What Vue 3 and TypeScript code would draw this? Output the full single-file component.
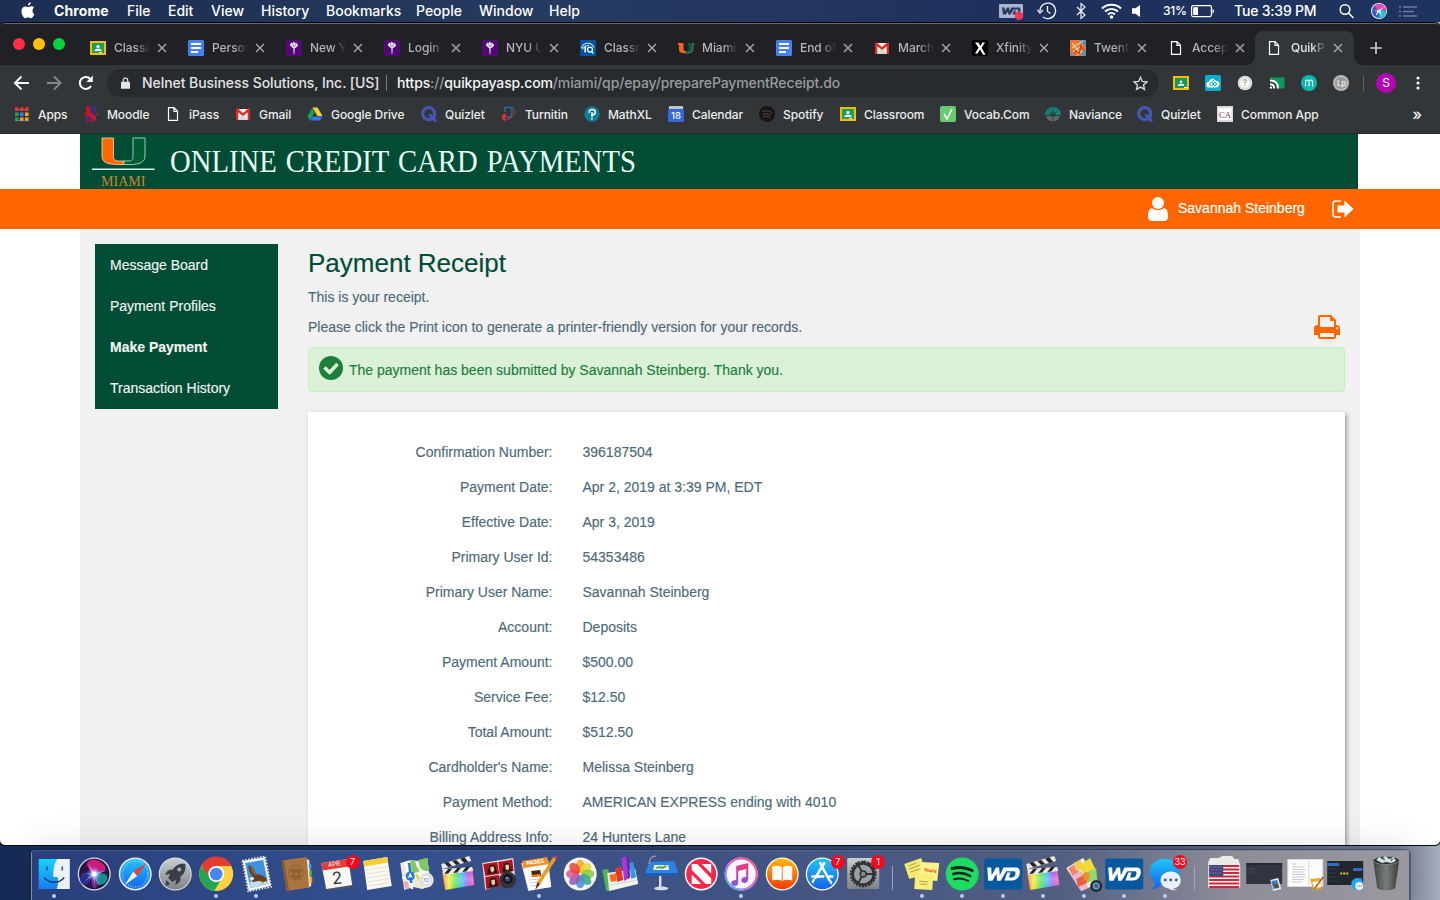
<script setup lang="ts">
interface Cell { name: string; width: number }
interface Tab { icon: string; title: string }
interface Bookmark { icon: string; label: string; width: number }
interface DockItem { icon: string; running?: boolean; badge?: string; divider?: boolean }
interface Glyph { text: string; x: number; y: number; size: number; fill: string; serif?: boolean; weight?: number; rotate?: string; length?: number }

const menus: Cell[] = [
  { name: 'File', width: 41 },
  { name: 'Edit', width: 43 },
  { name: 'View', width: 50 },
  { name: 'History', width: 65 },
  { name: 'Bookmarks', width: 90 },
  { name: 'People', width: 63 },
  { name: 'Window', width: 70 },
  { name: 'Help', width: 40 },
]

const tabs: Tab[] = [
  { icon: 'classroom', title: 'Classe' },
  { icon: 'docs', title: 'Person' },
  { icon: 'nyu', title: 'New Y' },
  { icon: 'nyu', title: 'Login' },
  { icon: 'nyu', title: 'NYU U' },
  { icon: 'iq', title: 'Classr' },
  { icon: 'umiami', title: 'Miami' },
  { icon: 'docs', title: 'End of' },
  { icon: 'gmail', title: 'March' },
  { icon: 'xfinity', title: 'Xfinity' },
  { icon: 'photo', title: 'Twent' },
  { icon: 'page', title: 'Accep' },
  { icon: 'page', title: 'QuikPA' },
]

const bookmarks: Bookmark[] = [
  { icon: 'apps', label: 'Apps', width: 69 },
  { icon: 'moodle', label: 'Moodle', width: 82 },
  { icon: 'page', label: 'iPass', width: 70 },
  { icon: 'gmail', label: 'Gmail', width: 72 },
  { icon: 'drive', label: 'Google Drive', width: 114 },
  { icon: 'quizlet', label: 'Quizlet', width: 80 },
  { icon: 'turnitin', label: 'Turnitin', width: 83 },
  { icon: 'pearson', label: 'MathXL', width: 84 },
  { icon: 'calendar', label: 'Calendar', width: 91 },
  { icon: 'spotify', label: 'Spotify', width: 81 },
  { icon: 'classroom', label: 'Classroom', width: 100 },
  { icon: 'vocab', label: 'Vocab.Com', width: 105 },
  { icon: 'naviance', label: 'Naviance', width: 92 },
  { icon: 'quizlet', label: 'Quizlet', width: 80 },
  { icon: 'common', label: 'Common App', width: 110 },
]

const extensions = ['ext-classroom', 'ext-cloud', 'ext-help', 'ext-cast', 'ext-m', 'ext-lp']

const nav = ['Message Board', 'Payment Profiles', 'Make Payment', 'Transaction History']

const receipt: [string, string][] = [
  ['Confirmation Number:', '396187504'],
  ['Payment Date:', 'Apr 2, 2019 at 3:39 PM, EDT'],
  ['Effective Date:', 'Apr 3, 2019'],
  ['Primary User Id:', '54353486'],
  ['Primary User Name:', 'Savannah Steinberg'],
  ['Account:', 'Deposits'],
  ['Payment Amount:', '$500.00'],
  ['Service Fee:', '$12.50'],
  ['Total Amount:', '$512.50'],
  ["Cardholder's Name:", 'Melissa Steinberg'],
  ['Payment Method:', 'AMERICAN EXPRESS ending with 4010'],
  ['Billing Address Info:', '24 Hunters Lane'],
]

const dock: DockItem[] = [
  { icon: 'finder', running: true },
  { icon: 'siri' },
  { icon: 'safari' },
  { icon: 'launchpad' },
  { icon: 'chrome', running: true },
  { icon: 'mail', running: true },
  { icon: 'contacts' },
  { icon: 'ical', badge: '7' },
  { icon: 'notes' },
  { icon: 'maps' },
  { icon: 'finalcut' },
  { icon: 'photobooth' },
  { icon: 'pages', running: true },
  { icon: 'photos' },
  { icon: 'numbers' },
  { icon: 'keynote' },
  { icon: 'news' },
  { icon: 'itunes', running: true },
  { icon: 'books' },
  { icon: 'appstore', badge: '7' },
  { icon: 'settings', badge: '1' },
  { icon: '', divider: true },
  { icon: 'stickies', running: true },
  { icon: 'spotifyapp', running: true },
  { icon: 'wd', running: true },
  { icon: 'finalcut', running: true },
  { icon: 'swatches', running: true },
  { icon: 'wd', running: true },
  { icon: 'messages', running: true, badge: '33' },
  { icon: '', divider: true },
  { icon: 'usfolder' },
  { icon: 'win-dark' },
  { icon: 'win-doc' },
  { icon: 'win-chat' },
  { icon: 'trash' },
]

// Lettering that sits on top of an icon's shapes, in the icon's own units.
const glyphs: Record<string, Glyph[]> = {
  moodle: [{ text: 'NATICK', x: 8, y: 9.6, size: 4, fill: '#bb2335', serif: true, length: 15 }],
  calendar: [{ text: '18', x: 8, y: 13, size: 9.5, fill: '#fff', weight: 500 }],
  common: [{ text: 'CA', x: 8, y: 11.5, size: 9, fill: '#a52855', serif: true, length: 12 }],
  'ext-help': [{ text: '?', x: 8, y: 11, size: 8.5, fill: '#aaa', weight: 700 }],
  'ext-lp': [{ text: 'Lp', x: 8.5, y: 11, size: 7.5, fill: '#eee', weight: 600 }],
  ical: [
    { text: 'APR', x: 17, y: 12, size: 6, fill: '#fff', rotate: 'rotate(-6 18 12)' },
    { text: '2', x: 20, y: 30, size: 17, fill: '#353535', rotate: 'rotate(-6 20 25)' },
  ],
  maps: [{ text: '3D', x: 28, y: 28, size: 5, fill: '#789' }],
  pages: [{ text: 'PAGES', x: 16, y: 10, size: 5.5, fill: '#fff', weight: 700, rotate: 'rotate(-8 16 9)' }],
  stickies: [{ text: 'Yours', x: 28, y: 18, size: 4.5, fill: '#e12b1b', weight: 700, rotate: 'rotate(6 28 18)' }],
}

const petals = ['#f7a823', '#e9d92c', '#8fc642', '#35ae82', '#4a90d9', '#8a62b5', '#d9569c', '#ee4a3a']
const teeth = Array.from({ length: 12 }, (_, i) => i * 30)
</script>

<template>
  <div class="desktop">
    <svg class="defs" width="0" height="0">
      <defs>
        <linearGradient id="rainbow" x1="0" x2="1"><stop offset="0" stop-color="#fb5f2c" /><stop offset=".2" stop-color="#f7ea18" /><stop offset=".42" stop-color="#45e04a" /><stop offset=".62" stop-color="#29b7f0" /><stop offset=".8" stop-color="#a64bf0" /><stop offset="1" stop-color="#f342a4" /></linearGradient>
        <linearGradient id="whiteup" x1="0" x2="0" y1="0" y2="1"><stop offset="0" stop-color="#fff" stop-opacity="0" /><stop offset=".5" stop-color="#fff" stop-opacity=".35" /><stop offset="1" stop-color="#fff" stop-opacity=".1" /></linearGradient>
        <linearGradient id="skyblue" x1="0" x2="0" y1="0" y2="1"><stop offset="0" stop-color="#1fc4fb" /><stop offset="1" stop-color="#1563e8" /></linearGradient>
        <linearGradient id="finderblue" x1="0" x2="0" y1="0" y2="1"><stop offset="0" stop-color="#12d3fd" /><stop offset="1" stop-color="#1a7df2" /></linearGradient>
        <linearGradient id="sunset" x1="0" x2="0" y1="0" y2="1"><stop offset="0" stop-color="#ffb800" /><stop offset="1" stop-color="#f23a08" /></linearGradient>
        <linearGradient id="steel" x1="0" x2="0" y1="0" y2="1"><stop offset="0" stop-color="#c9ced0" /><stop offset="1" stop-color="#7d8386" /></linearGradient>
        <linearGradient id="note" x1="0" x2="0" y1="0" y2="1"><stop offset="0" stop-color="#f9386c" /><stop offset="1" stop-color="#7a58ee" /></linearGradient>
        <linearGradient id="ring" x1="1" x2="0" y1="0" y2="1"><stop offset="0" stop-color="#ff4d62" /><stop offset=".5" stop-color="#e55be8" /><stop offset="1" stop-color="#29c5f5" /></linearGradient>
        <radialGradient id="siriglow"><stop offset="0" stop-color="#fff" /><stop offset=".3" stop-color="#c9b7f3" stop-opacity=".7" /><stop offset=".7" stop-color="#5d2bd6" stop-opacity="0" /></radialGradient>
        <linearGradient id="bin" x1="0" x2="1"><stop offset="0" stop-color="#3d4240" /><stop offset=".5" stop-color="#777b79" /><stop offset="1" stop-color="#333735" /></linearGradient>
      </defs>

      <symbol id="i-classroom" viewBox="0 0 16 16"><path fill="#fbbc04" d="M0 1h16v14H0z" /><path fill="#18a05e" d="M2 3h12v10H2z" /><circle cx="8" cy="6.5" r="1.6" fill="#fff" /><path fill="#fff" d="M4.2 11c0-1.8 2-2.3 3.8-2.3s3.8.5 3.8 2.3z" /><path fill="#e8e8e8" d="M9 12h3v1H9z" /></symbol>
      <symbol id="i-docs" viewBox="0 0 16 16"><rect width="16" height="16" rx="1.5" fill="#4580f4" /><path stroke="#fff" stroke-width="1.8" d="M3 4h10M3 8h10M3 12h7" /></symbol>
      <symbol id="i-nyu" viewBox="0 0 16 16"><path fill="#4f0b73" d="M0 0h16v16H0z" /><path fill="#e9dcf2" d="M7.200 7h1.600l-.4 7h-.8z" /><path fill="#efe4f5" d="M3.800 5.200C4 3.500 5 4 5.300 2.500l1.200.8L7.800 1.500l1.200 1.700 1.500-.8.3 1.600 1.500.8-.9 1.700L9.300 8H6.800z" /><path d="M6.500 3.500 7.500 7M9.500 4 8.500 7" stroke="#7b4697" stroke-width=".6" /></symbol>
      <symbol id="i-iq" viewBox="0 0 16 16"><path fill="#0053a0" d="M0 0h16v16H0z" /><path d="M1.500 8C3 2.500 11 1 14 7.500M2 9c2-1 2-4 7-3.500" stroke="#d9e9f7" fill="none" stroke-width="1.100" /><path d="M5.200 7v5.500" stroke="#fff" stroke-width="1.500" /><circle cx="10" cy="9.600" r="2.500" fill="none" stroke="#fff" stroke-width="1.300" /><path d="m11 11 2.500 2.500" stroke="#fff" stroke-width="1.300" /></symbol>
      <symbol id="i-umiami" viewBox="0 0 16 16"><path fill="#f4641e" d="M0 3h5.500v6.500c0 .8 1 1.500 2.500 1.500v2.300C3 13.300 1 12.300 1 9.500V5H0z" /><path fill="#0a5a38" d="M10 3h6v2h-1v4.500c0 2.800-2 3.800-7 3.800V11c1.500 0 2.800-.5 2.800-1.500V5H10z" /><path stroke="#9fb6a8" stroke-width=".5" fill="none" d="M15.600 3v2h-.8v4.500c0 2.500-2 3.400-6.800 3.500" /></symbol>
      <symbol id="i-gmail" viewBox="0 0 16 16"><path fill="#f0f0f0" d="M1 3h14v11H1z" /><path fill="#d8d8d8" d="m3 14 5-5 5 5z" /><path fill="#e02a20" d="M1 2.500h1.700L8 7.200l5.300-4.700H15V14h-2.300V6.200L8 10 3.300 6.200V14H1z" /></symbol>
      <symbol id="i-xfinity" viewBox="0 0 16 16"><path d="M0 0h16v16H0z" /><path fill="#fff" d="M3 2.500h3.500L8.300 6l2.200-3.500h2.500L9.600 7.700l3.900 7H11L8 9.500 5.500 13.500H3l3.600-5.800z" /></symbol>
      <symbol id="i-photo" viewBox="0 0 16 16"><path fill="#e2793a" d="M0 0h16v16H0z" /><path fill="#5c91b5" d="M9 0h7v7L11 3zM0 12l4 4H0zM11 12l5-3v7h-4z" /><path d="m2 8 11-7M3 12l10-7M7 15l7-5M2 3l8 10" stroke="#ffc388" stroke-width="1.300" /><path d="m4 14 2-4 3 4 2-9 3 6" stroke="#a33a1d" fill="none" /></symbol>
      <symbol id="i-page" viewBox="0 0 16 16"><path d="M3.500 1.700h5.600l3.400 3.500v9.200h-9zM9 1.700v3.700h3.500" fill="none" stroke="#fff" stroke-width="1.200" /></symbol>
      <symbol id="i-apps" viewBox="0 0 16 16"><path fill="#e8231a" d="M1 1h3.500v4H1zM6 1h3.500v4H6zM11 1h3.500v4H11z" /><path fill="#19a35b" d="M1 6.500h3.500v3.500H1zM1 11.500h3.500V15H1z" /><path fill="#2b82f0" d="M6 6.500h3.500v3.500H6z" /><path fill="#f5a81c" d="M11 6.500h3.500v3.500H11zM6 11.500h3.500V15H6zM11 11.500h3.500V15H11z" /><path stroke="#888" stroke-width=".7" d="M1 3.700h13.500M1 14.700h13.500" /></symbol>
      <symbol id="i-moodle" viewBox="0 0 16 16"><path fill="#c01425" d="M3 0h3.500l5 16H8.500L6 9v7H3z" /><path fill="#2e308d" d="M7 0h6v6l-4-1zM3 11l5 1v3H4z" /><path fill="#2e308d" d="M9.500 0H13v16h-2z" /><path fill="#d3202e" d="m9 9 4 2-1 4-3-4z" /></symbol>
      <symbol id="i-drive" viewBox="0 0 16 16"><path fill="#ffce35" d="M5.500 1.500h5l5 8.500h-5z" /><path fill="#18a35d" d="M5.200 2 .5 10.200 3 14.500 7.700 6.300z" /><path fill="#3575ed" d="M6 10.500h9.500L13 14.500H3.500z" /></symbol>
      <symbol id="i-quizlet" viewBox="0 0 16 16"><circle cx="7.700" cy="7.700" r="6" fill="none" stroke="#4755b5" stroke-width="3.200" /><path d="m8.500 8.500 6.500 7" stroke="#4755b5" stroke-width="3" /></symbol>
      <symbol id="i-turnitin" viewBox="0 0 16 16"><path d="M4 6V1.500h7v6c0 4-3 5-5 3" fill="none" stroke="#276b9c" stroke-width="1.700" /><path d="M12.500 2.500C17 5 12 14 2.500 14V8.500" fill="none" stroke="#c0303a" stroke-width="1" /><path fill="#e02a30" d="M.2 10.500 3.500 7l2.800 4.500-2-.5v3.700H2.500z" /></symbol>
      <symbol id="i-pearson" viewBox="0 0 16 16"><circle cx="8" cy="8" r="7.700" fill="#0e7c91" /><path d="M5.500 7C4.500 5 6 3.500 8.300 3.500c4.200 0 4 5.500-.3 5.500M8 6v5" fill="none" stroke="#fff" stroke-width="1.500" /><circle cx="7.900" cy="12.700" r=".9" fill="#fff" /></symbol>
      <symbol id="i-calendar" viewBox="0 0 16 16"><path fill="#bec4cf" d="M1 0h14v4H1z" /><path fill="#3468d8" d="M0 3h16v13H0z" /></symbol>
      <symbol id="i-spotify" viewBox="0 0 16 16"><circle cx="8" cy="8" r="8" fill="#191414" /><path d="M3 5.500c3-1 7-1 10 1M3.500 8.300c3-.8 6-.5 8.700 1M4 10.800c2.500-.6 5-.3 7.200 1" stroke="#4a4646" fill="none" stroke-width="1.200" /></symbol>
      <symbol id="i-vocab" viewBox="0 0 16 16"><rect width="16" height="16" rx="2" fill="#67cb70" /><path d="m4 8 3 5 5-10" stroke="#fff" stroke-width="1.500" fill="none" /></symbol>
      <symbol id="i-naviance" viewBox="0 0 16 16"><path d="M0 9a8 8 0 0 1 16 0z" fill="#168078" /><path d="M1 10h14a7.300 7.300 0 0 1-14 0z" fill="#62696c" /><path d="m8 1.500.7 5.700L12 5l-2 3.500 4.500 1.500H1.500L6 8.500 4 5l3.300 2.200zM7.500 10h1v5h-1zM3 13l3-3h1zM13 13l-3-3H9z" fill="#24403f" /></symbol>
      <symbol id="i-common" viewBox="0 0 16 16"><path fill="#d9d9d9" d="M0 0h16v16H0z" /><path fill="#fff" d="M1.500 2h13v12h-13z" /></symbol>
      <symbol id="i-ext-classroom" viewBox="0 0 16 16"><path fill="#fbbc04" d="M0 1h16v14H0z" /><path fill="#12975b" d="M2 3h12v10H2z" /><circle cx="8" cy="6.700" r="1.300" fill="#fff" /><path fill="#fff" d="M4.500 10.700C5 9 6.500 8.700 8 8.700s3 .3 3.500 2zM11 12h3v1h-3z" /></symbol>
      <symbol id="i-ext-cloud" viewBox="0 0 16 16"><rect width="16" height="16" rx="1.500" fill="#06aed0" /><path fill="#fff" d="M4.500 12.500a3 3 0 0 1-.3-6C5 3 9.500 2.700 11 6c3 0 4 2 3.300 4-.5 1.500-1.500 2.500-3.300 2.500z" /><circle cx="6.500" cy="9" r="1.600" fill="none" stroke="#06aed0" /><circle cx="9.800" cy="9" r="1.600" fill="none" stroke="#06aed0" /><path d="m7 7 3-3" stroke="#06aed0" /></symbol>
      <symbol id="i-ext-help" viewBox="0 0 16 16"><circle cx="8" cy="8" r="7.300" fill="#dcdcdc" /><circle cx="8" cy="8" r="4.700" fill="#f8f8f8" /></symbol>
      <symbol id="i-ext-cast" viewBox="0 0 16 16"><path fill="#0a9b5c" d="M1 2.500h14.500v11H1z" /><path fill="#303538" d="M0 4.500c7 0 9.500 4 10 9.500H0z" /><path d="M1 5.500c5 0 8 3 8 8M1 9.200c2.700 0 4.300 1.700 4.300 4.300" stroke="#fff" stroke-width="1.900" fill="none" /><circle cx="2" cy="12.600" r="1.200" fill="#fff" /></symbol>
      <symbol id="i-ext-m" viewBox="0 0 16 16"><circle cx="8" cy="8" r="8" fill="#0ab9b1" /><path d="M4.500 11.500V6.500c0-1.800 3.500-1.800 3.500 0v5m0-5c0-1.800 3.500-1.800 3.500 0v5" fill="none" stroke="#fff" stroke-width="1.100" /></symbol>
      <symbol id="i-ext-lp" viewBox="0 0 16 16"><circle cx="8" cy="8" r="8" fill="#b8b8b8" /><circle cx="8" cy="8" r="6" fill="#999" /></symbol>

      <symbol id="i-finder" viewBox="0 0 40 40"><path fill="url(#finderblue)" d="M4.500 5h31v30h-31z" /><path fill="#eef1f6" d="M23 5h12.500v30h-13c1.500-4 1.500-7 1-12h-4.500C19 16 20 9 23 5z" /><path d="M12.700 12.500v4M28 12.500v4M10 23.500c5 6.500 15 6.500 20 0" stroke="#173b5e" stroke-width="1.300" fill="none" /></symbol>
      <symbol id="i-siri" viewBox="0 0 40 40"><circle cx="20" cy="20" r="16.500" fill="#d8dbe3" /><circle cx="20" cy="20" r="15.200" fill="#261642" /><path d="M20 20C12 14 10 8 17 6s18 6 13 11z" fill="#cf1a78" /><path d="M20 20C11 17 6 19 6 25s5 7 8 5z" fill="#2e2a8a" /><path d="M20 20c9-2 14 0 13 5s-7 7-11 5z" fill="#11918f" /><path d="M20 20C16 25 17 33 20 34s5-8 0-14z" fill="#7a2790" /><circle cx="20" cy="20" r="12" fill="url(#siriglow)" /><path d="m6 19 14 .5L33 16l-12 5 4 11-6-11-9 7 8-8z" fill="#6ee6e8" opacity=".85" /><path d="m14 9 6 10.500 1 12-3-11z" fill="#f6a4e5" opacity=".8" /><circle cx="20" cy="20" r="2.500" fill="#fff" /></symbol>
      <symbol id="i-safari" viewBox="0 0 40 40"><circle cx="20" cy="20" r="16.500" fill="#e9edf2" /><circle cx="20" cy="20" r="15" fill="url(#skyblue)" /><circle cx="20" cy="20" r="13" fill="none" stroke="#a3dcff" stroke-width="2" stroke-dasharray=".5 1.300" /><path fill="#f13c35" d="M31 9 18 17.500l4 4.500z" /><path fill="#f2f2f2" d="M9.500 31 18 17.500l4 4.500z" /></symbol>
      <symbol id="i-launchpad" viewBox="0 0 40 40"><circle cx="20" cy="20" r="16.500" fill="#dfe3e6" /><circle cx="20" cy="20" r="15.500" fill="url(#steel)" /><path fill="#393f44" d="M30 10c-6-1-10 2-13 6-3-1-6 1-7 5l5-1-2 4 4 4 4-2-1 5c4-2 6-4 5-8 4-3 6-7 5-13zM11 26l-1 6 5-2z" /><circle cx="24" cy="15.500" r="2" fill="#a6adb0" /></symbol>
      <symbol id="i-chrome" viewBox="0 0 40 40"><circle cx="20" cy="20" r="17" fill="#ffd13f" /><path fill="#e63b31" d="M5 12a17 17 0 0 1 30.500 0H20l-7 12z" /><path fill="#23a653" d="M4.800 12.500A17 17 0 0 0 18 37l8.500-14h-13z" /><circle cx="20" cy="20" r="8" fill="#fff" /><circle cx="20" cy="20" r="6.300" fill="#4688f1" /></symbol>
      <symbol id="i-mail" viewBox="0 0 40 40"><path fill="#f4f4f1" d="m6.500 7 22-4 6 29-22 5z" /><path d="m6 6.500 23-4.300L35 33l-23 4.500z" fill="none" stroke="#f4f4f1" stroke-width="1.500" stroke-dasharray="1.500 1.500" /><path fill="#3f92e0" d="m9 9 18-3 5 24-18 4z" /><path fill="#bfdcf2" d="m13 28 18-3 1 5-18 4z" /><path fill="#69401f" d="m12 11 5 3 3 6 5 1 5 3 1 3-4 1-4-1-6 1-3-3 4-1c-4-3-6-8-6-14z" /><path fill="#8c6136" d="m14 13 3 2 3 5-1 1c-3-2-4-5-5-8z" /><path fill="#f3e7d6" d="m13 24 4-1 1 2-3 2z" /><path fill="#deb23f" d="m25 28 3 0-2 3z" /></symbol>
      <symbol id="i-contacts" viewBox="0 0 40 40"><path fill="#f0e9dc" d="m29 5 3 1 2 26-4 2z" /><path fill="#33a8d8" d="M31.500 10H34v5h-2z" /><path fill="#5cb63c" d="M32 16h2.500v6H32z" /><path fill="#f3a62b" d="M32.500 23H35v6h-2.500z" /><path fill="#a9743f" d="m4.500 6.500 25-3.500 2.500 30.500L9.500 37z" /><path fill="#8b5d2f" d="m4.500 6.500 2.500-.4L12 36.600l-2.500.4z" /><circle cx="19" cy="18.500" r="7.500" fill="none" stroke="#8e6234" /><circle cx="16.500" cy="17" r="2.700" fill="#8e6234" /><circle cx="21.500" cy="17" r="2.700" fill="#8e6234" /><path fill="#8e6234" d="M13 22.500c2-3 5-3 6-.5 1-2.500 4-2.500 6 0-3 3.500-9 4-12 .5z" /></symbol>
      <symbol id="i-ical" viewBox="0 0 40 40"><path fill="#4e555f" d="m9 34 27-4v3L10 37z" /><path fill="#f7f7f5" d="m4 9 27-4 4 26-26 4z" /><path fill="#dd3f3d" d="m4 9 27-4 1.200 7.500-27 4z" /></symbol>
      <symbol id="i-notes" viewBox="0 0 40 40"><path fill="#faf8ef" d="m5 7 24-4 4.500 29L9 36z" /><path fill="#f5cf35" d="m5 7 24-4 1 5.500-24 4z" /><path d="m7 16 23-3.500M8 20l23-3.500M9 24l22-3.500M9 28l23-3.500M10 32l22-3.500" stroke="#d4d0c5" stroke-width=".6" /></symbol>
      <symbol id="i-maps" viewBox="0 0 40 40"><path fill="#eee8d8" d="m2 9 10-3 8 1 9-3 4 28-9 3-9-2-9 3z" /><path fill="#7fc95f" d="m20 6 9-2 2 14-9-3zM12 6l7 1 2 10-7 3z" /><path d="m7 8 7 27M18 7c2 9 7 13 14 15M4 24l26-6" stroke="#fff" stroke-width="2.500" fill="none" /><path d="m18 20 6 12" stroke="#f5c842" stroke-width="2" /><path fill="#e9a8b8" d="m5 28 4-1 2 7-4 1z" /><path d="m11 9 2 20" stroke="#2277db" stroke-width="2.500" /><circle cx="12" cy="22" r="4.500" fill="#2277db" /><path fill="#fff" d="m12 18.500 2.500 5.500-2.500-1-2.500 1z" /><circle cx="28" cy="26" r="7.500" fill="#e5e7e9" /><circle cx="28" cy="26" r="5" fill="#f9f9f9" stroke="#abb" stroke-width=".6" /></symbol>
      <symbol id="i-finalcut" viewBox="0 0 40 40"><path fill="url(#rainbow)" d="m4 18 30-4 2 17-29 5z" /><path fill="url(#whiteup)" d="m4 18 30-4 2 17-29 5z" /><path fill="#e8e8e5" d="M3 10 31 2l2 5-29 8zM4 15l30-2 1 4-30 4z" /><path fill="#252525" d="m6 9 4-1 4 4-4 1zM14 7l4-1 4 4-4 1zM22 5l4-2 4 5-4 1zM6 20l4-5 4-.5-4 5zM15 19l4-5 4-.5-4 5zM24 18l4-5 4-.5-4 5z" /></symbol>
      <symbol id="i-photobooth" viewBox="0 0 40 40"><path fill="#e6dede" d="m3 9 31-5 2 20-30 12z" /><path fill="#b41020" d="m4 10 14-2 2 12-14 2zM19 8l14-2.500 1.500 11.500-14 3zM6 23l14-2 1 11-14 3z" /><path fill="#281c1b" d="m8 20 2-8q3-3 6 0l2 7zM23 18l2-8q3-3 5 0l3 7zM9 34l2-9q3-3 6 0l2 7z" /><path fill="#efc5a7" d="m11 13 3.500-.5.7 4-2 2-1.800-1.600zM26 11l3.500-.5.5 4-1.600 2-2-1.600zM12 26l3.500-.5.5 4-1.600 2-2-1.600z" /><circle cx="28.500" cy="26" r="8.500" fill="#343436" /><circle cx="28.500" cy="25" r="5" fill="#101722" /><circle cx="28.500" cy="25" r="2.500" fill="#56416e" /><circle cx="27.500" cy="24" r="1" fill="#87b3c2" /></symbol>
      <symbol id="i-pages" viewBox="0 0 40 40"><path fill="#e7e4df" d="m2 9 27-3 3 27-23 4z" /><path fill="#fff" d="m4 15 24-4 4 22-22 3z" /><path fill="#f39020" d="m3 7 25-4 1 7-25 4z" /><path fill="#42240f" d="m12 17 9-1 1 6-9 1z" /><path fill="#f58620" d="m12 21 9-1v2l-9 1z" /><path stroke="#aaa" stroke-width=".6" d="m10 26 10-1M10 29l9-1M11 32l9-1M23 17l5-1M23 20l6-1" /><path fill="#f09a19" d="m34 3 3 2-16 25-3-2z" /><path fill="#663718" d="m18 28 3 2-5 6z" /><path fill="#d35" d="m34 3 1-2 3 2-1 2z" /></symbol>
      <symbol id="i-photos" viewBox="0 0 40 40"><circle cx="20" cy="20" r="16.500" fill="#f4f4f4" /><ellipse v-for="(c, i) in petals" :key="c" cx="20" cy="12.300" rx="4.500" ry="6.500" :fill="c" opacity=".87" :transform="`rotate(${i * 45} 20 20)`" /></symbol>
      <symbol id="i-numbers" viewBox="0 0 40 40"><path fill="#4eb84f" d="m2 16 6-1 4 21-6 1z" /><path fill="#f2f2ee" d="m7 19 28-4 3 15-29 7z" /><path stroke="#b8c4b6" d="m8 26 28-4M9 31l28-5" stroke-width=".6" /><path fill="#ef6a20" d="m9 21 7-2v8l-5 1z" /><path fill="#e53627" d="m15 14 6-1 2 13-6 2z" /><path fill="#a638db" d="m21 4 5-2 3 22-5 3z" /><path fill="#7021a7" d="m26 2 2 1 2 20-2 2z" /><path fill="#3099e5" d="m29 9 4-1 3 15-5 2z" /><path fill="#ffad57" d="m9 21 5-2 2 1-5 1z" /></symbol>
      <symbol id="i-keynote" viewBox="0 0 40 40"><path fill="#2c82e1" d="m8 8 25-1 4 12H4z" /><path fill="#1e5cb5" d="M4 19h33v3H4z" /><path d="M19 22v13" stroke="#d8dde6" stroke-width="2.400" fill="none" /><path d="M8 10C8 5 10 2 15 2" stroke="#9aa5b5" stroke-width="1.200" fill="none" /><path fill="#d8dde6" d="M13 34c2-2 12-2 14 0 1 3-15 3-14 0z" /><path fill="#eef4fa" d="M13 11h14l1 5H12z" /><path d="m15 14 4-1 2 1 4-2" stroke="#54a64e" fill="none" stroke-width="2" /></symbol>
      <symbol id="i-news" viewBox="0 0 40 40"><circle cx="20" cy="20" r="16.500" fill="#fff" /><circle cx="20" cy="20" r="15" fill="#f7274b" /><path fill="#fff" d="M10.500 10h5.500l14 14.500V30h-5.500L10.500 16zM10.500 20.500l9.500 9.500h-9.500zM20.500 10H30v9.500z" /></symbol>
      <symbol id="i-itunes" viewBox="0 0 40 40"><circle cx="20" cy="20" r="16.500" fill="#fff" /><circle cx="20" cy="20" r="15.500" fill="#f7f6fb" stroke="url(#ring)" stroke-width="2" /><path fill="url(#note)" d="m15 12 12-3v16c0 5-7 5-7 1 0-2 2-3 5-3v-8l-8 2v12c0 4-7 4-7 0 0-2 2-3 5-3z" /></symbol>
      <symbol id="i-books" viewBox="0 0 40 40"><circle cx="20" cy="20" r="16.500" fill="#fff" /><circle cx="20" cy="20" r="15.200" fill="url(#sunset)" /><path fill="#fff" d="M10 12.500c4-1 8-1 9.500 1v13.500c-2-1.500-6-1.500-9.500-.5zM30 12.500c-4-1-8-1-9.500 1v13.500c2-1.500 6-1.500 9.500-.5z" /></symbol>
      <symbol id="i-appstore" viewBox="0 0 40 40"><circle cx="20" cy="20" r="16.500" fill="#fff" /><circle cx="20" cy="20" r="15.200" fill="url(#skyblue)" /><path d="m18 9 9 17M22 9l-9 15M10 22.500h11M25 22.500h5" stroke="#fff" stroke-width="2.600" stroke-linecap="round" /><path d="m11.500 26-1 2M28 27l1 2" stroke="#fff" stroke-width="2.200" stroke-linecap="round" /></symbol>
      <symbol id="i-settings" viewBox="0 0 40 40"><rect x="4" y="4" width="32" height="31" rx="1" fill="url(#steel)" /><circle cx="20" cy="20" r="12" fill="none" stroke="#383c3e" stroke-width="3" stroke-dasharray="2 1" /><circle cx="20" cy="20" r="10.500" fill="#999fa2" stroke="#303335" stroke-width="2.500" /><path d="M20 20h10M20 20l-5-9M20 20l-5 9" stroke="#303335" stroke-width="1.800" /><path v-for="t in teeth" :key="t" d="M19 7h2v2h-2z" fill="#333" :transform="`rotate(${t} 20 20)`" /><circle cx="20" cy="20" r="3" fill="#85898c" stroke="#303335" stroke-width="1.500" /></symbol>
      <symbol id="i-stickies" viewBox="0 0 40 40"><path fill="#f4e972" d="m2 10 17-6 5 16-17 5z" /><path fill="#fdf386" d="m18 8 19 1-2 18-19-2z" /><path fill="#f7ed79" d="m13 20 18 1-1 15-18-1z" /><path d="m6 12 8-3M7 15l11-4M8 18l10-3M17 27l9 1M18 30l7 .5" stroke="#8b8344" stroke-width=".7" /></symbol>
      <symbol id="i-spotifyapp" viewBox="0 0 40 40"><circle cx="20" cy="20" r="16.500" fill="#1edb62" /><path d="M10 14.500c7-2 14-1 20 2" stroke="#17211b" stroke-width="3" fill="none" stroke-linecap="round" /><path d="M11 20c6-1.700 12-.8 17 2" stroke="#17211b" stroke-width="2.500" fill="none" stroke-linecap="round" /><path d="M12 25.200c5-1.200 10-.5 14 1.800" stroke="#17211b" stroke-width="2" fill="none" stroke-linecap="round" /></symbol>
      <symbol id="i-wd" viewBox="0 0 40 40"><rect x="1" y="4.500" width="38" height="31" rx="2" fill="#06599e" /><path d="M4 13.500h4l.4 8 4.300-8h3.200l.7 8 3.600-8h13c6 0 4 13-4 13h-8l2.800-8h3.400l-1.700 5h3.500c3 0 4.500-6.300 1.500-6.300H23l-5.500 9.500h-3.600l-.7-7-4 7H5z" fill="#fff" /></symbol>
      <symbol id="i-swatches" viewBox="0 0 40 40"><path fill="#f1eee5" d="m2 14 17-10 16 25-18 8z" /><path fill="#ed876e" d="m4 14 7-4 4 8-7 4z" /><path fill="#f5cb50" d="m16 6 4 9-8 2-3-8z" /><path fill="#edb3d2" d="m7 22 10-5 7 17-8 2z" /><path fill="#92d86c" d="m17 20 15-6 1 12-12 3z" /><path fill="#f0da34" d="m17 10 9-6 5 11-13 4z" /><path fill="#e7603b" d="m12 25 8-4 3 8-9 4z" /><path fill="#f28a2e" d="m20 18 6 1-2 8-5-2z" /><circle cx="32" cy="32" r="6" fill="#242328" /><circle cx="32" cy="32" r="3.700" fill="#3daab7" /><circle cx="32" cy="32" r="2" fill="#8d3790" /></symbol>
      <symbol id="i-messages" viewBox="0 0 40 40"><path fill="url(#skyblue)" d="M19 5c22 0 20 26 1 26l-4-.5C13 34 10 35 6 35c4-3 4-4 3-7C-1 20 5 5 19 5z" /><path fill="#e9f2fc" d="M25.500 17.500c13 0 13 16.500 2 17 1 .8 3 1.200 5 1-4 1.500-7 .5-9-1-12-2-10-17 2-17z" /><path d="M20 26h.1M25.500 26h.1M31 26h.1" stroke="#32639d" stroke-width="2.800" stroke-linecap="round" /></symbol>
      <symbol id="i-usfolder" viewBox="0 0 40 40"><path fill="#eceae6" d="M4 8 6 4h9l3-2h10l2 3h4l2 6v23H4z" /><path fill="#f4f4f4" d="M5 11h30v23H5z" /><path stroke="#c52b3e" stroke-width="1.800" d="M5 12h30M5 15.500h30M5 19h30M5 22.500h30M5 26h30M5 29.500h30M5 33h30" /><path fill="#40457d" d="M5 11h14v11H5z" /><path stroke="#c8cade" stroke-dasharray="1 1.500" stroke-width=".7" d="M6 13h12M7 16h11M6 19h12" /></symbol>
      <symbol id="i-win-dark" viewBox="0 0 40 40"><path fill="#30353f" d="M2 9h36v21H2z" /><path fill="#23272e" d="M2 9h36v2H2z" /><path stroke="#525967" d="M4 15h7M4 18h5" stroke-width=".7" /><path fill="#e8edf3" d="m26 26 8-2 3 11-8 2z" /><path fill="#3d82c7" d="m27 27 6-1 2 8-6 1z" /><path fill="#684324" d="m28 28 3 3 2-2 2 4-4 1z" /></symbol>
      <symbol id="i-win-doc" viewBox="0 0 40 40"><path fill="#d8d8d8" d="M2 5h36v28H2z" /><path fill="#fbfbfb" d="M3 6h20v26H3zM24 6h13v26H24z" /><path stroke="#b5b5b5" stroke-width=".7" d="M7 10h5M7 13h12M7 15.500h13M7 18h12M7 20.500h13M7 23h13M7 25.500h12M7 28h10" /><path fill="#f6a220" d="m25 25 10-1 2 11-9 1z" /><path fill="#fff" d="m27 28 8-1 1 6-7 1z" /><path d="m38 23-9 12" stroke="#a55d15" stroke-width="1.500" /></symbol>
      <symbol id="i-win-chat" viewBox="0 0 40 40"><path fill="#21262f" d="M2 7h36v24H2z" /><path fill="#2b6dc9" d="M2 9h12v3H2zM28 14h9v3h-9zM30 24h7v3h-7z" /><path stroke="#47607c" d="M4 15h9M4 19h8M4 23h9M4 27h9" stroke-width=".8" stroke-dasharray="1 1" /><path fill="#eebf2b" d="M15 18.500h2v2h-2zM18 18.500h2v2h-2zM21 18.500h2v2h-2z" /><circle cx="32" cy="30" r="6" fill="#21a3f7" /><circle cx="34" cy="32" r="4" fill="#e4f3fe" /><path stroke="#3072a4" stroke-dasharray="1 1" d="M32 32h5" stroke-width="1" /></symbol>
      <symbol id="i-trash" viewBox="0 0 40 40"><path fill="url(#bin)" d="m7 6 4 28c3 3 15 3 18 0l4-28z" /><ellipse cx="20" cy="6.500" rx="13" ry="4" fill="#2d302e" stroke="#8c9191" stroke-width=".8" /><path fill="#dce2df" d="m10 6 3-3 3 2 3-3 4 3 4-2 3 4-5 2-5-1-4 1z" /><path fill="#467d90" d="m15 5 3-1 1 3zM24 4l3 1-2 3z" /><path stroke="#929795" opacity=".3" d="m10 13 6 19M14 12l6 22M20 12l6 20M27 13l-8 20M31 12l-9 21M20 12 14 33" stroke-width=".7" /></symbol>
    </svg>

    <header class="menubar">
      <svg class="apple" viewBox="0 0 14 17"><path fill="#fff" d="M9.800.3c.1 1.500-1.200 3.200-2.900 3.200C6.700 1.900 8.200.5 9.800.3zM13.300 12.200c-.7 1.800-2 4-3.500 4-1 0-1.400-.7-2.700-.7-1.400 0-1.800.7-2.800.7C2.500 16.200.5 12.500.5 9.300.5 6 2.400 4.400 4.300 4.400c1.200 0 2.100.7 2.900.7.700 0 1.900-.8 3.300-.8.600 0 1.900.2 2.700 1.500-2.300 1.300-2 5.100.1 6.400z" /></svg>
      <b class="app-name">Chrome</b>
      <span v-for="m in menus" :key="m.name" :style="{ width: m.width + 'px' }">{{ m.name }}</span>
      <div class="status">
        <svg class="recorder" width="38" height="18" viewBox="0 0 38 18"><rect y="2" width="24" height="14" rx="1" fill="#a9b5d3" /><path d="M3 5.500h2.600l.3 3.500 2.300-3.500h2l.3 3.500 2-3.500H20c2.500 0 2 7-2 7h-4.500l1.500-4h2l-.8 2.200h1.500c1.400 0 2-3.200.5-3.200h-3.500L11.500 12.500H9.300L9 9.500l-2.300 3H4z" fill="#28385f" /><circle cx="20" cy="13.700" r="4.200" fill="#fa3454" /></svg>
        <svg width="36" height="20" viewBox="0 0 36 20" fill="none" stroke="#f3f5fa" stroke-width="1.300"><path d="M3 10a7.800 7.800 0 1 1 3 6" /><path d="m.5 9 2.500 3 3-3M10.500 5v5.500l3 2" /></svg>
        <svg width="27" height="20" viewBox="0 0 27 20" fill="none" stroke="#eef1f7" stroke-width="1.200"><path d="m4 6 8 8-4 3.500v-15L12 6l-8 8" /></svg>
        <svg width="30" height="20" viewBox="0 0 30 20" fill="none" stroke="#fff" stroke-width="2"><path d="M2 7.500c5-5 14-5 19 0M5 10.500c4-3.500 9-3.500 13 0M8 13.500c2-2 5-2 7 0" /><circle cx="11.500" cy="16" r=".8" fill="#fff" /></svg>
        <svg width="33" height="20" viewBox="0 0 33 20"><path fill="#fff" d="M2 7.200h3.500L10 4v12l-4.500-3.200H2z" /></svg>
        <span class="percent">31%</span>
        <svg width="43" height="20" viewBox="0 0 43 20"><rect x=".6" y="4.600" width="19.800" height="11" rx="1.500" fill="none" stroke="#fff" stroke-width="1.200" /><path fill="#fff" d="M2.200 6.200H7V14H2.200zM21.500 8c2 .5 2 4 0 4.500z" /></svg>
        <span class="clock">Tue 3:39 PM</span>
        <svg width="32" height="20" viewBox="0 0 32 20" fill="none" stroke="#fff" stroke-width="1.500"><circle cx="7" cy="8.500" r="4.800" /><path d="m10.500 12 5 5" /></svg>
        <svg width="28" height="20" viewBox="0 0 28 20"><circle cx="9" cy="10" r="8" fill="#f0edf8" /><circle cx="9" cy="10" r="7" fill="#3b55c0" /><path d="M9 10C3 6 5 3 9 3s7 3 7 6z" fill="#e24aac" /><path d="M9 10c5-2 8 0 6 4s-5 3-6 2z" fill="#24c6d4" /><path fill="#fff" d="m3 10 6-1 5-3-4 4 2 5-3-4-3 4 1-5z" /></svg>
        <svg width="42" height="20" viewBox="0 0 42 20" stroke="#6b7ba3" stroke-width="1.600"><path d="M1 6h2M1 10.500h2M1 15h2M5 6h14M5 10.500h11M5 15h14" /></svg>
      </div>
    </header>

    <main class="window">
      <div class="tabstrip">
        <div class="lights"><i class="red" /><i class="amber" /><i class="green" /></div>
        <div v-for="(t, i) in tabs" :key="i" class="tab" :class="{ active: i === tabs.length - 1, bare: i === tabs.length - 2 }">
          <svg class="icon"><use :href="'#i-' + t.icon" /></svg>
          <span class="tab-title">{{ t.title }}</span>
          <svg class="close" viewBox="0 0 10 10"><path d="m1 1 8 8M9 1 1 9" /></svg>
        </div>
        <svg class="plus" viewBox="0 0 12 12"><path d="M6 0v12M0 6h12" stroke="#c8cacc" stroke-width="1.700" /></svg>
      </div>

      <div class="toolbar">
        <svg class="tool" viewBox="0 0 32 28"><path d="M15.500 7.500 9 14l6.500 6.500M9 14h14" stroke="#fff" stroke-width="2" fill="none" /></svg>
        <svg class="tool" viewBox="0 0 32 28"><path d="m16 7.500 6.500 6.500-6.500 6.500M22.500 14H9" stroke="#84888a" stroke-width="1.900" fill="none" /></svg>
        <svg class="tool" viewBox="0 0 32 28"><path d="M21 17a6 6 0 1 1-.8-7.200" stroke="#fff" stroke-width="2" fill="none" /><path fill="#fff" d="M22.800 6.500V13h-6.500z" /></svg>
        <div class="omnibox">
          <svg class="lock" viewBox="0 0 10 13"><path fill="#e3e5e6" d="M1 5h8q1 0 1 1v6q0 1-1 1H1q-1 0-1-1V6q0-1 1-1z" /><path d="M2.500 6V3.500a2.500 2.500 0 0 1 5 0V6" stroke="#e3e5e6" stroke-width="1.300" fill="none" /></svg>
          <span class="issuer">Nelnet Business Solutions, Inc. [US]</span>
          <span class="url">https<em>://</em>quikpayasp.com<em>/miami/qp/epay/preparePaymentReceipt.do</em></span>
          <svg class="star" viewBox="0 0 14 14"><path d="m7 1.200 1.700 3.900 4.300.4-3.200 2.800.9 4.200L7 10.300l-3.700 2.200.9-4.200L1 5.500l4.300-.4z" fill="none" stroke="#d5d7d8" stroke-width="1.300" /></svg>
        </div>
        <div class="extensions">
          <svg v-for="e in extensions" :key="e" class="icon"><use :href="'#i-' + e" /><text v-for="g in glyphs[e] || []" :key="g.text" :x="g.x" :y="g.y" :font-size="g.size" :fill="g.fill" :font-weight="g.weight" text-anchor="middle">{{ g.text }}</text></svg>
        </div>
        <span class="avatar">S</span>
        <svg class="kebab" viewBox="0 0 4 14"><circle cx="2" cy="2" r="1.600" /><circle cx="2" cy="7" r="1.600" /><circle cx="2" cy="12" r="1.600" /></svg>
      </div>

      <div class="bookmarks">
        <span v-for="(b, i) in bookmarks" :key="i" class="bookmark" :style="{ width: b.width + 'px' }">
          <svg class="icon"><use :href="'#i-' + b.icon" /><text v-for="g in glyphs[b.icon] || []" :key="g.text" :x="g.x" :y="g.y" :font-size="g.size" :fill="g.fill" :font-weight="g.weight" :textLength="g.length" :class="{ serif: g.serif }" text-anchor="middle" lengthAdjust="spacingAndGlyphs">{{ g.text }}</text></svg>
          {{ b.label }}
        </span>
        <span class="more">»</span>
      </div>

      <section class="page">
        <div class="banner">
          <svg width="600" height="55" viewBox="0 0 600 55">
            <path d="M22 4h11.500v18.500c0 3 1.500 4.500 5 4.500H44v3.500h-5.500C26 30.500 22 28 22 22z" fill="#ff6700" stroke="#ffdab6" stroke-width=".8" />
            <path d="M53 4h12v18c0 6-5 8.500-15 8.500h-6V27h4.500c3.500 0 4.500-1.500 4.500-4.500z" fill="#005a34" stroke="#8ed4b5" stroke-width="1" />
            <path d="M12 35.200h62.500" stroke="#d9f8f0" stroke-width="1.500" />
            <text class="serif" x="21" y="51.500" textLength="44.500" lengthAdjust="spacingAndGlyphs" font-size="14.500" fill="#c98631">MIAMI</text>
            <text class="serif headline" x="90" y="38" textLength="466" lengthAdjust="spacingAndGlyphs" font-size="30.500" fill="#e8fff9">ONLINE CREDIT CARD PAYMENTS</text>
          </svg>
        </div>
        <div class="userbar">
          <svg width="20" height="24" viewBox="0 0 20 24"><circle cx="10" cy="6" r="6" fill="#fff" /><path fill="#fff" d="M4 11c3.500 3 8.500 3 12 0 3 .5 4 4 4 8.500 0 3-1.500 4.500-4 4.500H4c-2.500 0-4-1.500-4-4.500C0 15 1 11.500 4 11z" /></svg>
          <span>Savannah Steinberg</span>
          <svg class="exit" width="22" height="18" viewBox="0 0 22 18"><path d="M9 1H4Q1 1 1 4v10q0 3 3 3h5" fill="none" stroke="#fff" stroke-width="1.600" /><path fill="#fff" d="M5.500 5.500h7V.5L21.500 9l-9 8.500v-5h-7z" /></svg>
        </div>
        <div class="container">
          <nav class="sidebar"><a v-for="n in nav" :key="n" :class="{ current: n === 'Make Payment' }">{{ n }}</a></nav>
          <div class="content">
            <h1>Payment Receipt</h1>
            <p>This is your receipt.</p>
            <div class="print-row">
              <p>Please click the Print icon to generate a printer-friendly version for your records.</p>
              <svg width="26" height="24" viewBox="0 0 26 24"><path fill="#f60" fill-rule="evenodd" d="M6 0h11l5 5v5q4 0 4 3v7h-4v2q0 2-2 2H6q-2 0-2-2v-2H0v-7q0-3 4-3V2q0-2 2-2zm0 2v10h14V6h-4V2zm0 16v4h14v-4zm16.200-5.700v2h2v-2z" /></svg>
            </div>
            <div class="alert">
              <svg width="24" height="24" viewBox="0 0 24 24"><circle cx="12" cy="12" r="12" fill="#1c7f3c" /><path d="m5.500 11.500 5 5 8-8.500" fill="none" stroke="#daf1d8" stroke-width="3.600" stroke-linejoin="round" /></svg>
              <span>The payment has been submitted by Savannah Steinberg. Thank you.</span>
            </div>
            <dl class="card">
              <template v-for="r in receipt" :key="r[0]"><dt>{{ r[0] }}</dt><dd>{{ r[1] }}</dd></template>
            </dl>
          </div>
        </div>
      </section>
    </main>

    <footer class="dock">
      <div v-for="(d, i) in dock" :key="i" :class="d.divider ? 'divider' : 'dock-item'">
        <svg v-if="!d.divider" class="dock-icon" viewBox="0 0 40 40"><use :href="'#i-' + d.icon" width="40" height="40" /><text v-for="g in glyphs[d.icon] || []" :key="g.text" :x="g.x" :y="g.y" :font-size="g.size" :fill="g.fill" :font-weight="g.weight" :transform="g.rotate" text-anchor="middle">{{ g.text }}</text></svg>
        <span v-if="d.badge" class="badge">{{ d.badge }}</span>
        <i v-if="d.running" class="dot" />
      </div>
    </footer>
  </div>
</template>

<style>
body { margin: 0; overflow: hidden; }
</style>

<style scoped>
* { box-sizing: border-box; }
.desktop { width: 1440px; height: 900px; display: flex; flex-direction: column; overflow: hidden; font-family: Inter, "Liberation Sans", sans-serif; background: linear-gradient(90deg, #172b58 0, #263d6b 45%, #4f5b79 80%, #727a8e 97%, #a9afbf 100%); }
.defs { position: absolute; }
.serif { font-family: "Liberation Serif", serif; }
.headline { word-spacing: 2px; }
.icon { width: 16px; height: 16px; flex: none; display: block; }
.menubar { height: 22px; flex: none; display: flex; align-items: center; padding-left: 21px; background: linear-gradient(90deg, #1c2e51, #263b61 40%, #1e315c 70%, #1f335f); color: #fff; font-size: 14px; font-weight: 500; line-height: 22px; white-space: nowrap; }
.menubar span, .menubar b { flex: none; }
.apple { width: 14px; height: 17px; margin: -1px 19px 0 0; }
.app-name { width: 73px; font-weight: 700; letter-spacing: .1px; }
.status { display: flex; align-items: center; margin-left: auto; width: 441px; }
.status svg { flex: none; }
.recorder { margin-top: -1px; }
.percent { width: 28px; font-size: 12px; letter-spacing: -.2px; }
.clock { width: 104px; letter-spacing: -.2px; }
.window { height: 822px; flex: none; display: flex; flex-direction: column; background: #323639; border-top: 1px solid #64676a; border-radius: 5px; overflow: hidden; box-shadow: 0 0 0 1px #05080d; margin-top: 1px; }
.tabstrip { height: 41px; flex: none; display: flex; background: #202124; padding-top: 7px; }
.lights { width: 79px; flex: none; display: flex; gap: 8px; padding: 7px 0 0 13px; }
.lights i { width: 12px; height: 12px; border-radius: 50%; }
.red { background: #ff2e43; }
.amber { background: #ffc107; }
.green { background: #0bd33c; }
.tab { width: 98px; height: 34px; flex: none; display: flex; align-items: center; padding-left: 11px; position: relative; color: #b3b5b8; font-size: 12px; font-weight: 500; }
.tab::after { content: ""; width: 1px; height: 20px; background: #515357; margin-left: 10px; }
.tab.bare::after { display: none; }
.tab.active { background: #323639; border-radius: 8px 8px 0 0; width: 99px; color: #e4e5e6; }
.tab.active::before, .tab.active::after { content: ""; position: absolute; bottom: 0; width: 8px; height: 8px; margin: 0; }
.tab.active::before { left: -8px; background: radial-gradient(circle at 0 0, transparent 7.500px, #323639 8px); }
.tab.active::after { right: -8px; background: radial-gradient(circle at 100% 0, transparent 7.500px, #323639 8px); }
.tab.active .tab-title { margin-left: 9px; width: 35px; }
.tab-title { width: 36px; margin-left: 8px; flex: none; overflow: hidden; white-space: nowrap; line-height: 18px; letter-spacing: -.05px; mask-image: linear-gradient(90deg, #000 60%, transparent 100%); }
.close { width: 10px; height: 10px; margin-left: 7px; flex: none; fill: none; stroke: #a7a9ac; stroke-width: 1.400; }
.plus { width: 12px; height: 12px; margin: 11px 0 0 16px; }
.toolbar { height: 36px; flex: none; display: flex; align-items: center; padding-left: 6px; }
.tool { width: 32px; height: 28px; flex: none; }
.omnibox { width: 1052px; margin-left: 5px; height: 28px; border-radius: 14px; background: #272b2e; display: flex; align-items: center; color: #e2e4e5; font-size: 14px; font-weight: 450; white-space: nowrap; padding: 0 11px 0 14px; }
.lock { width: 9px; height: 12px; margin-right: 12px; flex: none; }
.issuer { width: 245px; border-right: 1px solid #777b7e; line-height: 16px; flex: none; letter-spacing: -.06px; }
.url { margin: -1px 0 0 10px; color: #f5f6f6; letter-spacing: -.13px; }
.url em { font-style: normal; color: #989c9f; }
.star { width: 15px; height: 15px; margin-left: auto; }
.extensions { display: flex; gap: 16px; padding: 0 14px 0 14px; border-right: 1px solid #5d6265; height: 16px; }
.avatar { width: 20px; height: 20px; margin-left: 12px; border-radius: 50%; background: #b506b5; color: #fff; font-size: 12px; text-align: center; line-height: 20px; }
.kebab { width: 4px; height: 14px; margin-left: 20px; fill: #f1f3f3; }
.bookmarks { height: 33px; flex: none; display: flex; align-items: center; padding: 0 18px 6px 14px; color: #eceeee; font-size: 12px; font-weight: 500; letter-spacing: -.08px; border-bottom: 1px solid #25292b; }
.bookmark { display: flex; align-items: center; gap: 8px; flex: none; white-space: nowrap; }
.more { margin-left: auto; font-size: 16px; line-height: 16px; }
.page { flex: 1; min-height: 0; background: #fff; font-family: "Liberation Sans", Arial, sans-serif; font-size: 14px; overflow: hidden; }
.banner { width: 1278px; height: 55px; margin-left: 80px; background: #004c34; }
.banner svg { display: block; }
.userbar { height: 40px; background: #f60; color: #fff; display: flex; align-items: center; padding-left: 1148px; }
.userbar span { margin: -2px 27px 0 10px; line-height: 16px; -webkit-text-stroke: .2px #fff; }
.container { width: 1280px; margin-left: 80px; background: #f1f1f1; padding: 15px 15px 0; display: flex; gap: 30px; align-items: flex-start; height: 616px; }
.sidebar { width: 183px; height: 165px; background: #004c34; flex: none; }
.sidebar a { display: block; height: 41px; padding-left: 15px; line-height: 42px; color: #f1f4f2; -webkit-text-stroke: .15px #f1f4f2; }
.sidebar .current { font-weight: 700; }
.content { width: 1037px; color: #4c6a79; -webkit-text-stroke: .15px; }
h1 { margin: 0; font-size: 26px; line-height: 38px; height: 43px; font-weight: 400; color: #004c34; }
p { margin: 0; line-height: 20px; height: 30px; }
.print-row { display: flex; justify-content: space-between; height: 30px; padding-right: 5px; }
.print-row svg { margin-top: -2px; }
.alert { height: 45px; background: #daf1d8; border: 1px solid #c9edbf; border-radius: 4px; color: #1b7d3c; display: flex; align-items: center; padding-left: 10px; }
.alert svg { margin: -4px 6px 0 0; }
.alert span { margin-top: 1px; }
.card { margin: 20px 0 0; height: 460px; padding: 23px 0 0; background: #fff; border-radius: 2px; box-shadow: 2px 2px 4px rgb(0 0 0 / 35%); display: grid; grid-template-columns: 244.500px 1fr; column-gap: 30px; grid-auto-rows: 35px; line-height: 35px; align-content: start; }
dt { text-align: right; }
dd { margin: 0; }
.dock { position: relative; width: 1379px; height: 50px; margin: 5px 0 0 31px; flex: none; display: flex; padding: 3px 0 0 2px; border-radius: 4px 4px 0 0; border: 1px solid #71809b66; border-bottom: 0; background: linear-gradient(90deg, #293f7b 0, #334f8d 25%, #405383 50%, #525f82 75%, #8d8d98 87%, #9a999f 100%); box-shadow: 0 0 0 1px #0d193566, 0 0 40px rgb(0 0 0 / 14%); }
.dock-item { width: 40.450px; height: 46px; flex: none; position: relative; }
.dock-icon { width: 40.450px; height: 40px; display: block; }
.divider { width: 18.800px; flex: none; height: 35px; margin-top: 6px; background: linear-gradient(#9aa6c2, #9aa6c2) center / 1px 24px no-repeat; }
.badge { position: absolute; right: -2px; top: 1px; width: 14px; height: 14px; border-radius: 50%; background: #f5071c; color: #fff; font-size: 9px; line-height: 14px; text-align: center; }
.dot { position: absolute; left: 18px; bottom: 2px; width: 4px; height: 4px; border-radius: 50%; background: #b9cdf6; }
</style>
